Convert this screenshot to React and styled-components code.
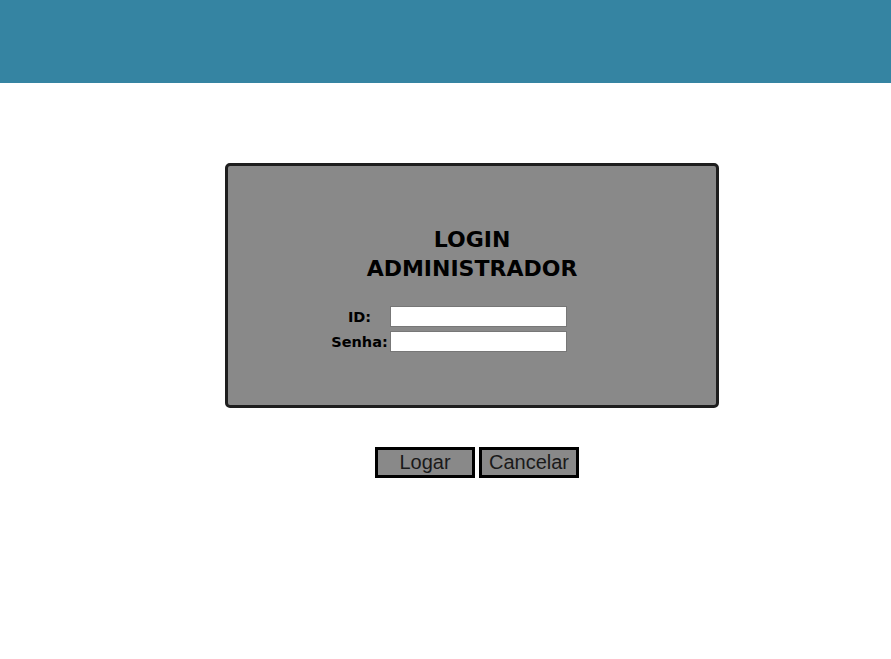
import React from "react";
import styled, { createGlobalStyle } from "styled-components";

const GlobalStyle = createGlobalStyle`
  body {
    margin: 0;
    background: #fff;
    font-family: "DejaVu Sans", sans-serif;
  }
`;

const Header = styled.header`
  height: 83px;
  background-color: #3584a2;
`;

const Main = styled.main`
  width: 494px;
  margin-left: 225px;
  padding-top: 80px;
`;

const Card = styled.div`
  box-sizing: border-box;
  width: 494px;
  height: 245px;
  padding: 59px 0 0;
  background-color: #898989;
  border: 3px solid #1e1e1e;
  border-radius: 5px;
  display: flex;
  flex-direction: column;
  align-items: center;
`;

const Title = styled.h2`
  margin: 0 0 23px;
  font-family: "DejaVu Sans", sans-serif;
  font-weight: 700;
  font-size: 22px;
  line-height: 29px;
  text-align: center;
  color: #000;
`;

const Form = styled.div`
  align-self: stretch;
  display: grid;
  grid-template-columns: auto 177px;
  justify-content: center;
  column-gap: 2px;
  row-gap: 4px;
  padding-right: 46px;
`;

const Label = styled.label`
  font-family: "DejaVu Sans", sans-serif;
  font-weight: 700;
  font-size: 14.5px;
  color: #000;
  text-align: center;
  align-self: center;
`;

const Input = styled.input`
  box-sizing: border-box;
  width: 177px;
  height: 21px;
  margin: 0;
  border: 1px solid #777;
  background: #fff;
  padding: 0 3px;
`;

const Actions = styled.div`
  display: flex;
  justify-content: center;
  gap: 4px;
  margin-top: 39px;
  padding-left: 10px;
`;

const Button = styled.button`
  box-sizing: border-box;
  width: 100px;
  height: 31px;
  padding: 0;
  background-color: #898989;
  border: 3px solid #000;
  border-radius: 0;
  font-family: "Liberation Sans", Arial, sans-serif;
  font-size: 20px;
  color: #1a1a1a;
  cursor: pointer;
`;

export default function App() {
  return (
    <>
      <GlobalStyle />
      <Header />
      <Main>
        <Card>
          <Title>
            LOGIN
            <br />
            ADMINISTRADOR
          </Title>
          <Form>
            <Label htmlFor="id">ID:</Label>
            <Input id="id" type="text" />
            <Label htmlFor="senha">Senha:</Label>
            <Input id="senha" type="password" />
          </Form>
        </Card>
        <Actions>
          <Button>Logar</Button>
          <Button>Cancelar</Button>
        </Actions>
      </Main>
    </>
  );
}
